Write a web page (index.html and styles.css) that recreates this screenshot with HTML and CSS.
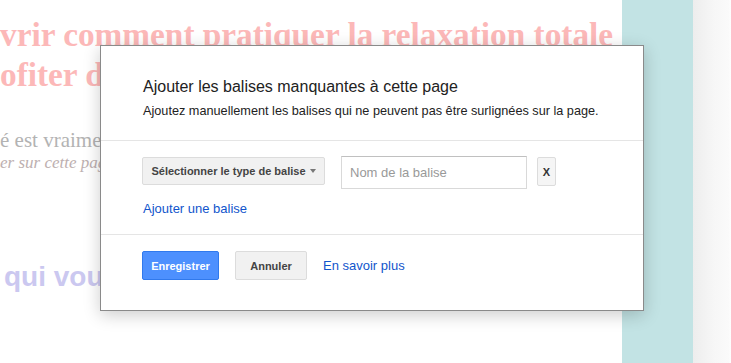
FILE: index.html
```html
<!DOCTYPE html>
<html lang="fr">
<head>
    <meta charset="UTF-8">
    <meta name="viewport" content="width=device-width, initial-scale=1.0">
    <title>Ajouter les balises manquantes</title>
    <link rel="stylesheet" href="styles.css">
</head>
<body>

<div class="page">
    <div class="article">
        <h1 class="headline">vrir comment pratiquer la relaxation totale<br>ofiter de</h1>
        <p class="lead">é est vraiment</p>
        <p class="lead-note">er sur cette page</p>
        <h2 class="subhead">qui vous</h2>
    </div>
    <div class="sidebar"></div>
    <div class="rail"></div>
</div>

<div class="modal">
    <div class="modal-head">
        <h3 class="modal-title">Ajouter les balises manquantes à cette page</h3>
        <p class="modal-desc">Ajoutez manuellement les balises qui ne peuvent pas être surlignées sur la page.</p>
    </div>
    <div class="modal-body">
        <div class="tag-row">
            <button class="btn btn-select">Sélectionner le type de balise <span class="caret"></span></button>
            <input class="tag-name" type="text" placeholder="Nom de la balise">
            <button class="btn btn-remove">X</button>
        </div>
        <a class="link add-link" href="#">Ajouter une balise</a>
    </div>
    <div class="modal-foot">
        <button class="btn btn-primary">Enregistrer</button>
        <button class="btn btn-cancel">Annuler</button>
        <a class="link" href="#">En savoir plus</a>
    </div>
</div>

</body>
</html>
```

FILE: styles.css
```css
body {
    margin: 0;
    background-color: #fff;
    font-family: "Liberation Sans", Arial, sans-serif;
}
.page {
    display: flex;
    height: 363px;
    overflow: hidden;
}
.article {
    flex: 0 0 622px;
    overflow: hidden;
    white-space: nowrap;
}
.headline {
    margin: 15px 0 0 0;
    font-family: "Liberation Serif", "Times New Roman", serif;
    font-size: 33.3px;
    line-height: 40px;
    font-weight: bold;
    color: #fcb8b8;
}
.lead {
    margin: 33px 0 0 0;
    font-family: "Liberation Serif", serif;
    font-size: 21px;
    line-height: 24px;
    color: #b3b3b3;
}
.lead-note {
    margin: 0;
    font-family: "Liberation Serif", serif;
    font-style: italic;
    font-size: 17px;
    line-height: 22px;
    color: #bdb0b0;
}
.subhead {
    margin: 87px 0 0 4px;
    font-size: 28px;
    line-height: 32px;
    font-weight: bold;
    color: #cbc8f0;
}
.sidebar {
    flex: 0 0 71px;
    background-color: #c2e3e4;
}
.rail {
    flex: 1;
    background: linear-gradient(to right, #ededed, #f7f7f7 22px, #fafafa 36px, #fff);
}

/* dialog */
.modal {
    position: absolute;
    left: 100px;
    top: 45px;
    width: 542px;
    height: 264px;
    background-color: #fff;
    border: 1px solid #8a8a8a;
    box-shadow: 0 4px 16px rgba(0, 0, 0, 0.2);
    color: #222;
}
.modal-head {
    padding: 31px 42px 21px 42px;
    border-bottom: 1px solid #e5e5e5;
}
.modal-title {
    margin: 0;
    font-size: 16px;
    line-height: 20px;
    font-weight: normal;
}
.modal-desc {
    margin: 6px 0 0 0;
    font-size: 12.7px;
    line-height: 16px;
}
.modal-body {
    padding: 15px 41px 17px 41px;
    border-bottom: 1px solid #e5e5e5;
}
.tag-row {
    display: flex;
    align-items: flex-start;
}
.btn {
    font-family: "Liberation Sans", Arial, sans-serif;
    font-size: 11px;
    font-weight: bold;
    border-radius: 2px;
    padding: 0;
    cursor: default;
}
.btn-select {
    width: 183px;
    height: 28px;
    margin-top: 1px;
    background-color: #f1f1f1;
    border: 1px solid #dcdcdc;
    color: #444;
}
.caret {
    display: inline-block;
    margin-left: 1px;
    vertical-align: 2px;
    border-left: 3px solid transparent;
    border-right: 3px solid transparent;
    border-top: 4px solid #777;
}
.tag-name {
    width: 186px;
    height: 33px;
    box-sizing: border-box;
    margin-left: 16px;
    padding: 0 8px;
    border: 1px solid #d9d9d9;
    border-top-color: #c0c0c0;
    font-family: "Liberation Sans", Arial, sans-serif;
    font-size: 13px;
    color: #222;
    outline: none;
}
.tag-name::placeholder {
    color: #999;
}
.btn-remove {
    width: 19px;
    height: 29px;
    margin: 1px 0 0 10px;
    background-color: #f5f5f5;
    border: 1px solid #dcdcdc;
    color: #333;
}
.link {
    font-size: 13px;
    line-height: 16px;
    color: #15c;
    text-decoration: none;
}
.add-link {
    display: inline-block;
    margin-top: 12px;
    margin-left: 1px;
}
.modal-foot {
    display: flex;
    align-items: center;
    gap: 16px;
    padding: 16px 41px;
}
.btn-primary {
    width: 77px;
    height: 29px;
    background-color: #4d90fe;
    border: 1px solid #3079ed;
    color: #fff;
}
.btn-cancel {
    width: 72px;
    height: 29px;
    background-color: #f1f1f1;
    border: 1px solid #dcdcdc;
    color: #444;
}
```
